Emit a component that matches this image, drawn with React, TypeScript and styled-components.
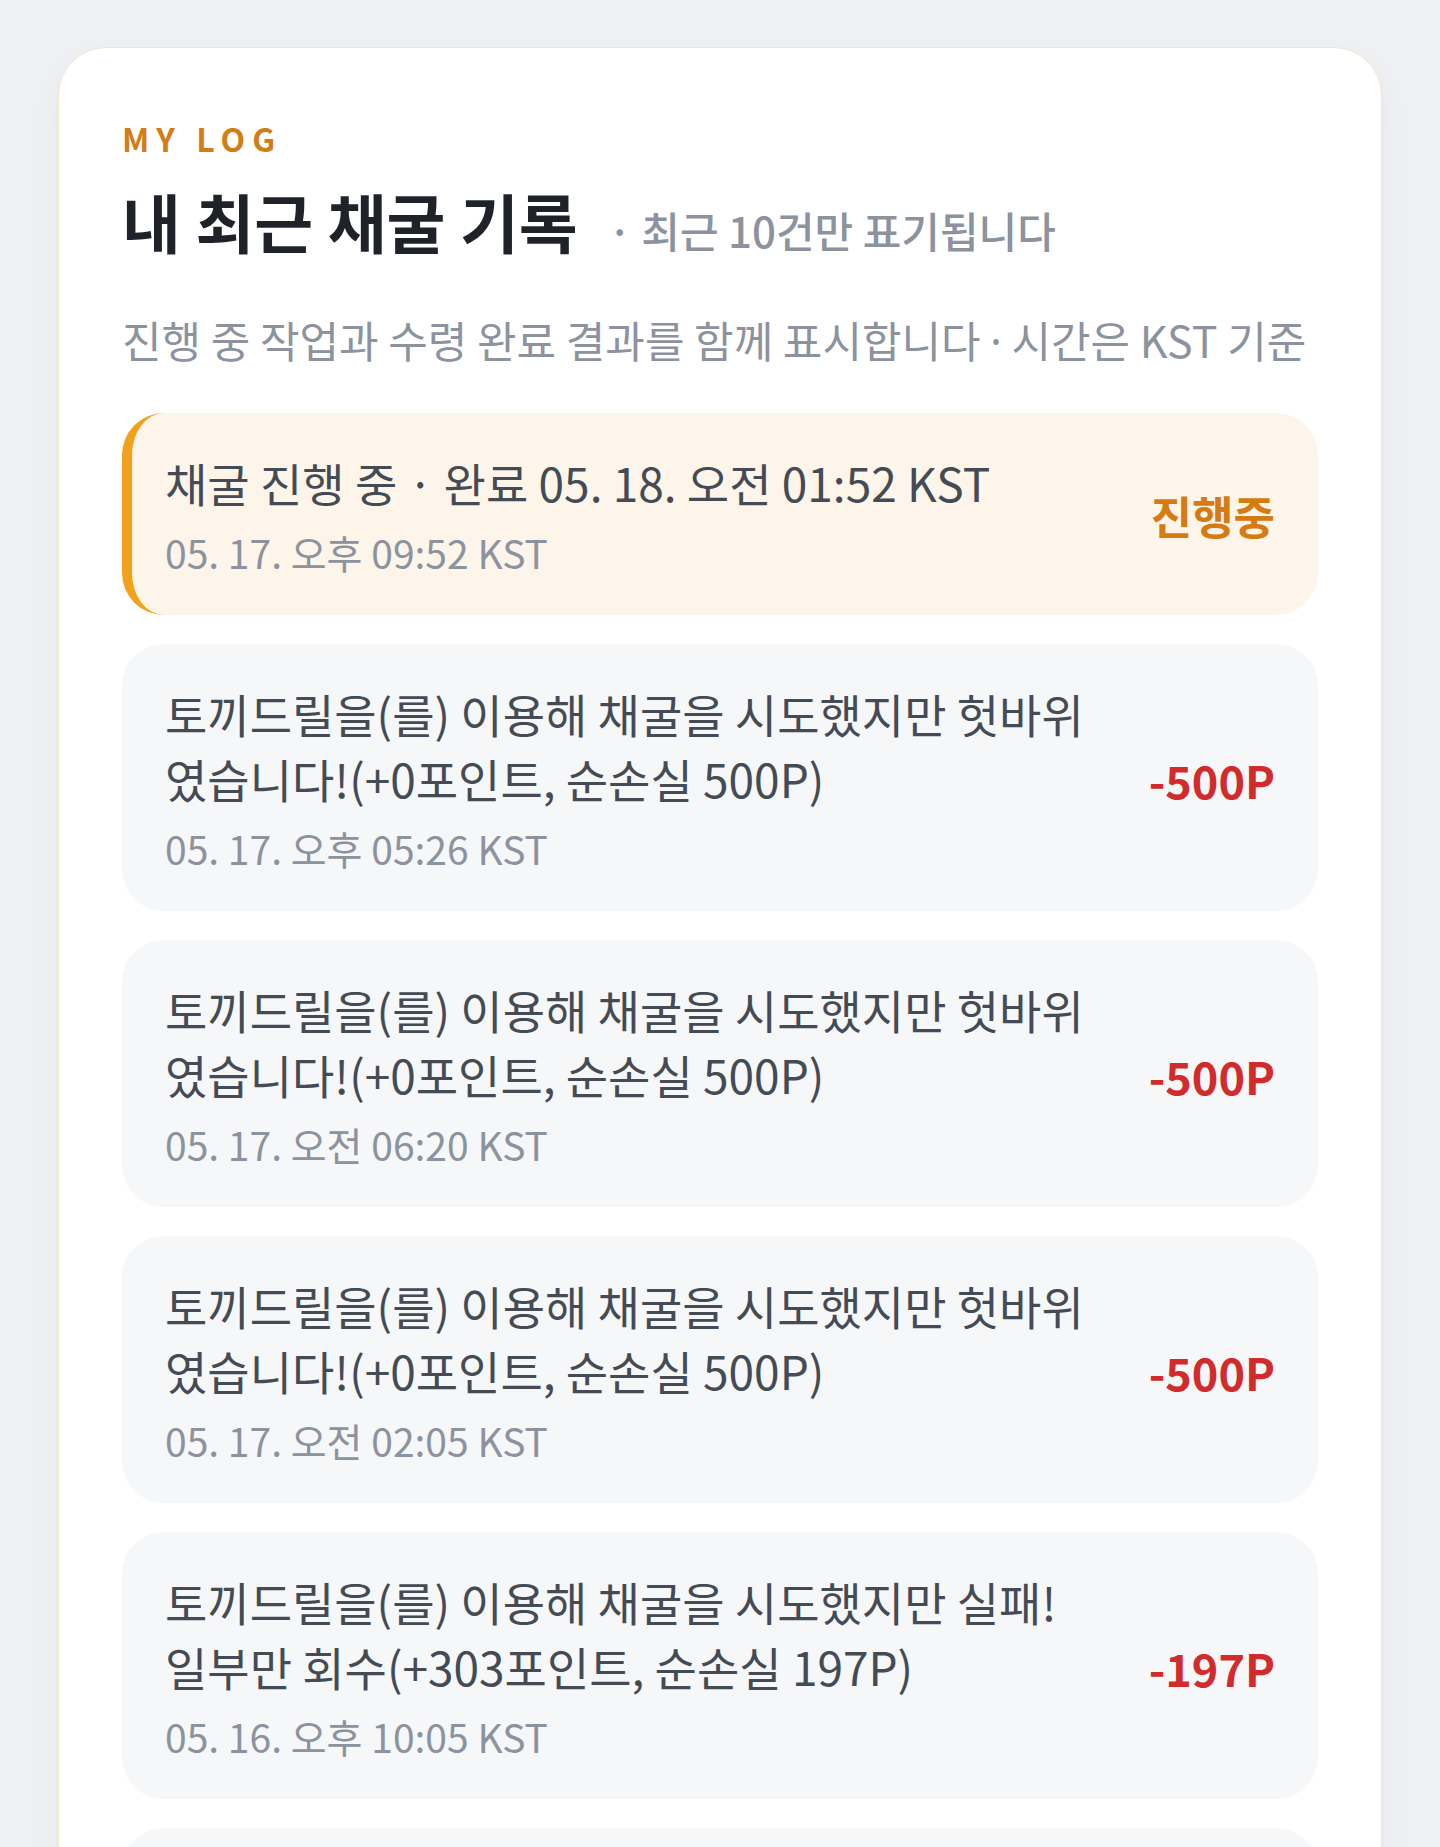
import styled, { createGlobalStyle } from 'styled-components'

type LogItem = {
  title: string
  time: string
  amount: string
  pending?: boolean
}

const LOGS: LogItem[] = [
  {
    title: '채굴 진행 중 · 완료 05. 18. 오전 01:52 KST',
    time: '05. 17. 오후 09:52 KST',
    amount: '진행중',
    pending: true,
  },
  {
    title: '토끼드릴을(를) 이용해 채굴을 시도했지만 헛바위였습니다!(+0포인트, 순손실 500P)',
    time: '05. 17. 오후 05:26 KST',
    amount: '-500P',
  },
  {
    title: '토끼드릴을(를) 이용해 채굴을 시도했지만 헛바위였습니다!(+0포인트, 순손실 500P)',
    time: '05. 17. 오전 06:20 KST',
    amount: '-500P',
  },
  {
    title: '토끼드릴을(를) 이용해 채굴을 시도했지만 헛바위였습니다!(+0포인트, 순손실 500P)',
    time: '05. 17. 오전 02:05 KST',
    amount: '-500P',
  },
  {
    title: '토끼드릴을(를) 이용해 채굴을 시도했지만 실패! 일부만 회수(+303포인트, 순손실 197P)',
    time: '05. 16. 오후 10:05 KST',
    amount: '-197P',
  },
  {
    title: '토끼드릴을(를) 이용해 채굴을 시도했지만 헛바위였습니다!(+0포인트, 순손실 500P)',
    time: '05. 16. 오후 06:05 KST',
    amount: '-500P',
  },
]

export default function App() {
  return (
    <>
      <GlobalStyle />
      <Page>
        <Card>
          <Eyebrow>MY LOG</Eyebrow>
          <HeadRow>
            <Title>내 최근 채굴 기록</Title>
            <Note>· 최근 10건만 표기됩니다</Note>
          </HeadRow>
          <Description>
            진행 중 작업과 수령 완료 결과를 함께 표시합니다 <Dot>·</Dot> 시간은 KST 기준
          </Description>
          <List>
            {LOGS.map((log, i) => (
              <Row key={i} $pending={log.pending}>
                <RowText>
                  <RowTitle>{log.title}</RowTitle>
                  <RowTime>{log.time}</RowTime>
                </RowText>
                <Amount $pending={log.pending}>{log.amount}</Amount>
              </Row>
            ))}
          </List>
        </Card>
      </Page>
    </>
  )
}

const GlobalStyle = createGlobalStyle`
  body {
    margin: 0;
    background: #eef0f3;
    font-family: 'Noto Sans CJK KR', 'Noto Sans', sans-serif;
  }
`

const Page = styled.main`
  min-height: 100vh;
  padding: 47px 58px 60px;
  box-sizing: border-box;
`

const Card = styled.section`
  background: #ffffff;
  border: 1px solid #f6e5c8;
  border-radius: 48px;
  padding: 70px 63px 48px;
  box-shadow: 0 12px 32px rgba(30, 40, 60, 0.04);
`

const Eyebrow = styled.div`
  font-size: 32px;
  line-height: 40px;
  font-weight: 700;
  letter-spacing: 0.22em;
  color: #d27d16;
`

const HeadRow = styled.div`
  display: flex;
  align-items: baseline;
  gap: 30px;
  margin-top: 22px;
`

const Title = styled.h1`
  margin: 0;
  font-size: 64px;
  line-height: 80px;
  font-weight: 700;
  color: #1f2329;
`

const Note = styled.span`
  font-size: 42px;
  font-weight: 500;
  color: #8c939e;
`

const Description = styled.p`
  margin: 49px 0 0;
  font-size: 43px;
  line-height: 60px;
  color: #8c939e;
`

const Dot = styled.span`
  font-family: 'Noto Sans', sans-serif;
`

const List = styled.div`
  display: flex;
  flex-direction: column;
  gap: 29px;
  margin-top: 41px;
`

const Row = styled.div<{ $pending?: boolean }>`
  display: flex;
  align-items: center;
  gap: 56px;
  border-radius: 42px;
  padding: 37px 43px 34px ${(p) => (p.$pending ? '33px' : '43px')};
  background: ${(p) => (p.$pending ? '#fdf5e9' : '#f6f7f9')};
  border-left: ${(p) => (p.$pending ? '10px solid #f2a11c' : 'none')};
`

const RowText = styled.div`
  flex: 1;
  min-width: 0;
`

const RowTitle = styled.div`
  font-size: 46px;
  line-height: 65px;
  color: #454b55;
`

const RowTime = styled.div`
  margin-top: 8px;
  font-size: 39px;
  line-height: 58px;
  color: #8c939e;
`

const Amount = styled.div<{ $pending?: boolean }>`
  flex-shrink: 0;
  font-size: 45px;
  font-weight: 700;
  color: ${(p) => (p.$pending ? '#d67a12' : '#d22b2b')};
`
